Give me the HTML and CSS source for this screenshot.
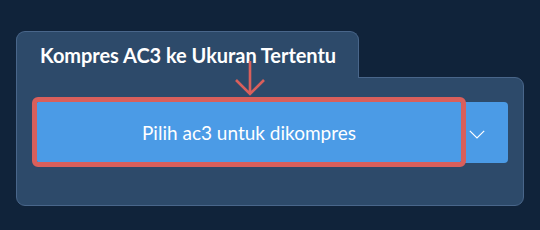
FILE: index.html
```html
<!DOCTYPE html>
<html>
<head>
<meta charset="utf-8">
<link rel="stylesheet" href="styles.css">
</head>
<body>
<div class="panel">
  <div class="tab"><h1 class="title">Kompres AC3 ke Ukuran Tertentu</h1></div>
  <div class="box">
    <div class="row">
      <button class="main">Pilih ac3 untuk dikompres</button>
      <button class="drop" aria-label="more">
        <svg width="16" height="9" viewBox="0 0 16 9"><polyline points="0.8,0.8 8,8 15.2,0.8" fill="none" stroke="#fff" stroke-width="1.2"/></svg>
      </button>
    </div>
    <svg class="arrow" width="30" height="36" viewBox="0 0 30 36"><path d="M15 0 V33 M1 19 L15 33 L29 19" fill="none" stroke="#d95f5b" stroke-width="2.6"/></svg>
  </div>
</div>
</body>
</html>
```
FILE: styles.css
```css
html, body {
  margin: 0;
  padding: 0;
  background: #10233a;
  width: 540px;
  height: 230px;
  overflow: hidden;
  font-family: Lato, "Open Sans", sans-serif;
}
.panel {
  margin: 31px 0 0 16px;
  width: 508px;
  display: flex;
  flex-direction: column;
  align-items: flex-start;
}
.tab {
  position: relative;
  z-index: 1;
  background: #2d4a6a;
  border: 1px solid #49668a;
  border-bottom: none;
  border-radius: 9px 9px 0 0;
  padding: 11px 22px 11px 23px;
  margin-bottom: -1px;
}
.title {
  margin: 0;
  font-size: 20px;
  line-height: 24px;
  font-weight: 700;
  color: #fff;
  letter-spacing: -0.05px;
  white-space: nowrap;
}
.box {
  position: relative;
  box-sizing: border-box;
  width: 508px;
  height: 129px;
  background: #2d4a6a;
  border: 1px solid #49668a;
  border-radius: 0 9px 9px 9px;
  padding: 24px 15px 0 20px;
}
.row {
  display: flex;
  height: 60px;
}
.main {
  width: 424px;
  height: 60px;
  border: none;
  margin: 0;
  background: #4b9be6;
  color: #fff;
  font-family: Lato, "Open Sans", sans-serif;
  font-size: 19px;
  font-weight: 400;
  outline: 5px solid #d95f5b;
  border-radius: 1px;
  padding: 0;
  position: relative;
  z-index: 1;
}
.drop {
  flex: 1;
  height: 61px;
  border: none;
  margin: 0;
  padding: 0 0 0 8px;
  background: #4b9be6;
  border-radius: 0 4px 4px 0;
  display: flex;
  align-items: center;
  justify-content: flex-start;
}
.drop svg {
  display: block;
  margin-top: 4px;
}
.arrow {
  position: absolute;
  left: 218px;
  top: -17px;
  z-index: 2;
}
```
